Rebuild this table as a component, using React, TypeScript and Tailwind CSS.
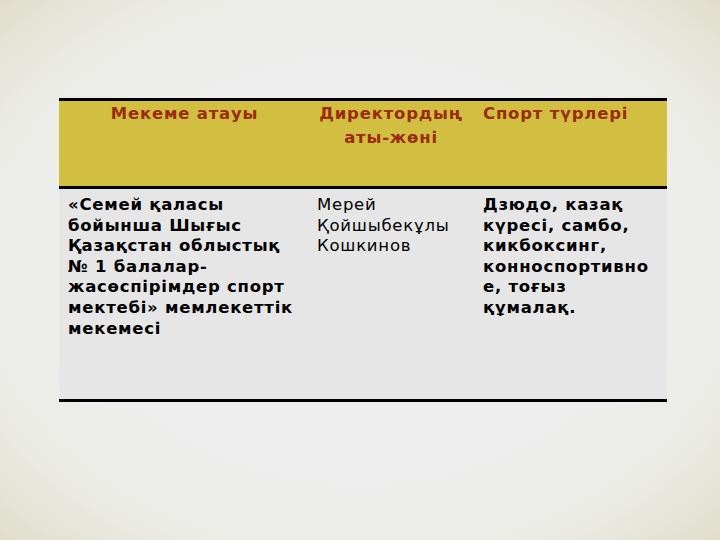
const orgLines = [
  "«Семей қаласы",
  "бойынша Шығыс",
  "Қазақстан облыстық",
  "№ 1 балалар-",
  "жасөспірімдер спорт",
  "мектебі» мемлекеттік",
  "мекемесі",
];

const directorLines = ["Мерей", "Қойшыбекұлы", "Кошкинов"];

const sportLines = [
  "Дзюдо, казақ",
  "күресі, самбо,",
  "кикбоксинг,",
  "конноспортивно",
  "е, тоғыз",
  "құмалақ.",
];

const Lines = ({ items }: { items: string[] }) => (
  <>
    {items.map((l) => (
      <div key={l} className="whitespace-nowrap">
        {l}
      </div>
    ))}
  </>
);

const App = () => {
  return (
    <div
      className="w-[720px] h-[540px] overflow-hidden bg-[radial-gradient(ellipse_at_center,#eeeeee_55%,#ebebe6_78%,#e0deca_100%)] pt-[98px] pl-[59px]"
      style={{ fontFamily: '"DejaVu Sans", Verdana, sans-serif' }}
    >
      <div className="w-[608px] border-t-[3px] border-b-[3px] border-black">
        <div className="grid grid-cols-[251px_166px_191px] h-[88px] bg-[#d2be41] text-[#9a2c0f] font-bold text-[16.5px] tracking-[0.8px] leading-[24px] border-b-[3px] border-black">
          <div className="pt-[1px] text-center">Мекеме атауы</div>
          <div className="pt-[1px] pr-[4px] text-center">
            Директордың
            <br />
            аты-жөні
          </div>
          <div className="pl-[7px] pt-[1px] whitespace-nowrap">Спорт түрлері</div>
        </div>
        <div className="grid grid-cols-[251px_166px_191px] h-[210px] bg-[#e6e6e6] text-black text-[16.5px] tracking-[0.75px] leading-[20.6px]">
          <div className="pl-[9px] pt-[6px] font-bold">
            <Lines items={orgLines} />
          </div>
          <div className="pl-[7px] pt-[6px]">
            <Lines items={directorLines} />
          </div>
          <div className="pl-[7px] pt-[6px] font-bold">
            <Lines items={sportLines} />
          </div>
        </div>
      </div>
    </div>
  );
};

export default App;
